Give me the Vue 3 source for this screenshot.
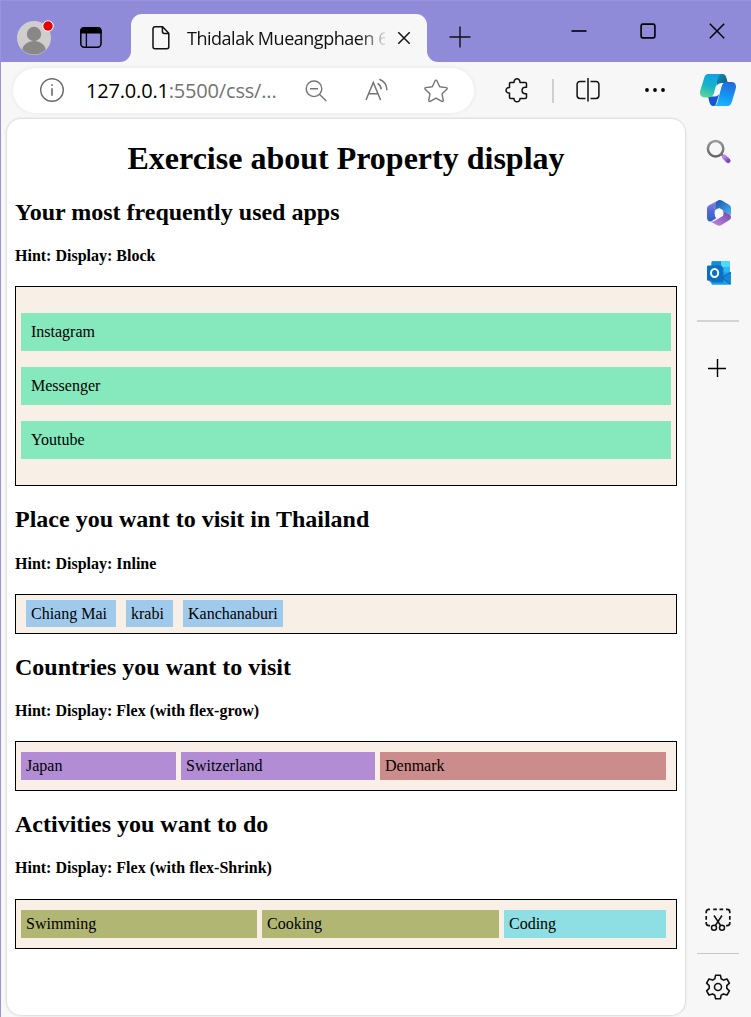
<script setup>
const apps = ['Instagram', 'Messenger', 'Youtube']
const places = [
  { name: 'Chiang Mai', cls: 'w90' },
  { name: 'krabi', cls: 'w47' },
  { name: 'Kanchanaburi', cls: 'w100' },
]
const countries = [
  { name: 'Japan', cls: 'purple w155' },
  { name: 'Switzerland', cls: 'purple w194' },
  { name: 'Denmark', cls: 'rose w286' },
]
const activities = [
  { name: 'Swimming', cls: 'olive w236' },
  { name: 'Cooking', cls: 'olive w237' },
  { name: 'Coding', cls: 'aqua w162' },
]
</script>

<template>
  <div class="window">
    <header class="titlebar">
      <svg class="avatar" width="40" height="40" viewBox="0 0 40 40">
        <defs><clipPath id="face"><circle cx="18" cy="20" r="16.5" /></clipPath></defs>
        <circle cx="18" cy="20" r="17" fill="#d0cecd" />
        <g clip-path="url(#face)" fill="#8a8886">
          <circle cx="18" cy="16" r="7.2" />
          <ellipse cx="18" cy="33.5" rx="12" ry="10.5" />
        </g>
        <circle cx="32" cy="8" r="5.8" fill="#f3eef5" />
        <circle cx="32" cy="8" r="4.7" fill="#e60000" />
      </svg>
      <svg class="workspaces" width="24" height="24" viewBox="0 0 24 24">
        <rect x="1.8" y="2.8" width="20.2" height="19.4" rx="3.4" fill="none" stroke="#000" stroke-width="1.5" />
        <path d="M1.2 8.6V6a4 4 0 0 1 4-4h13.4a4 4 0 0 1 4 4v2.6z" />
        <path d="M7.4 8v14" stroke="#000" stroke-width="1.3" />
      </svg>
      <div class="tab">
        <svg class="curve" width="11" height="11" viewBox="0 0 11 11"><path d="M11 0v11H0A11 11 0 0 0 11 0z" fill="#f7f7f7" /></svg>
        <svg class="curve right" width="11" height="11" viewBox="0 0 11 11"><path d="M0 0v11h11A11 11 0 0 1 0 0z" fill="#f7f7f7" /></svg>
        <svg class="doc" width="20" height="26" viewBox="0 0 20 26">
          <path d="M4 1.8h7.6l6.2 6.4v13.6a2 2 0 0 1-2 2H4a2 2 0 0 1-2-2v-18a2 2 0 0 1 2-2zM11.4 2v4.6a2 2 0 0 0 2 2h4.4" fill="none" stroke="#111" stroke-width="1.5" />
        </svg>
        <span class="tab-title">Thidalak Mueangphaen 6</span>
        <svg class="tab-close" width="14" height="14" viewBox="0 0 14 14"><path d="M1.3 1.3l11.4 11.4M12.7 1.3L1.3 12.7" stroke="#111" stroke-width="1.5" /></svg>
      </div>
      <svg class="newtab" width="22" height="22" viewBox="0 0 22 22"><path d="M.5 11h21M11 .5v21" stroke="#111" stroke-width="1.4" /></svg>
      <div class="controls">
        <svg width="16" height="16" viewBox="0 0 16 16"><path d="M.5 8h15" stroke="#000" stroke-width="1.6" /></svg>
        <svg width="16" height="16" viewBox="0 0 16 16"><rect x="1.1" y="1.1" width="13.8" height="13.8" rx="1.8" fill="none" stroke="#000" stroke-width="1.6" /></svg>
        <svg width="16" height="16" viewBox="0 0 16 16"><path d="M.8.8l14.4 14.4M15.2.8L.8 15.2" stroke="#000" stroke-width="1.5" /></svg>
      </div>
    </header>

    <div class="toolbar">
      <div class="address">
        <svg width="26" height="26" viewBox="0 0 26 26" fill="none" stroke="#6b6b6b" stroke-width="1.4">
          <circle cx="13" cy="13" r="11.3" /><path d="M13 11.3v7.4" stroke-width="1.6" /><circle cx="13" cy="8" r=".6" fill="#6b6b6b" stroke-width=".8" />
        </svg>
        <span class="url"><b>127.0.0.1</b>:5500/css/...</span>
        <svg class="zoomout" width="22" height="22" viewBox="0 0 22 22" fill="none" stroke="#747474" stroke-width="1.4">
          <circle cx="9" cy="8.8" r="7.8" /><path d="M5 8.8h8M14.6 14.6l6.7 6.4" />
        </svg>
        <svg class="read" width="24" height="24" viewBox="0 0 24 24" fill="none" stroke="#747474" stroke-width="1.5">
          <path d="M1 22L8.3 4.4 15.600 22M3.700 15.800h9.200" />
          <path d="M12.600 5.400c2.200 1.300 3.500 3.300 3.700 6M14.400 1.200c4.700 1.800 7.500 6 7.500 11" />
        </svg>
        <svg class="star" width="26" height="26" viewBox="0 0 26 26">
          <path d="M12.1 2.7c.35-.75 1.45-.75 1.8 0l2.8 6 6.6.9c.85.12 1.15 1.1.55 1.65l-4.8 4.6 1.2 6.5c.15.8-.7 1.4-1.4 1L13 20.2l-5.850 3.150c-.7.4-1.550-.2-1.400-1l1.200-6.500-4.800-4.600c-.6-.55-.3-1.530.55-1.650l6.600-.9z" fill="none" stroke="#747474" stroke-width="1.4" stroke-linejoin="round" />
        </svg>
      </div>
      <svg class="puzzle" width="26" height="26" viewBox="0 0 26 26">
        <path d="M5.500 5.500H9c-.2-5 6.200-5 6 0h5.200c.8 0 1.300.5 1.300 1.300v3.500h-1c-4.600 0-4.600 6.400 0 6.400h1v3.500c0 .8-.5 1.300-1.300 1.300H15c.2 4.400-6.200 4.400-6 0H5.800c-.8 0-1.300-.5-1.300-1.300v-4.100c-4.600.2-4.600-5.800 0-5.600V6.700c0-.7.4-1.200 1-1.200z" fill="none" stroke="#111" stroke-width="1.5" stroke-linejoin="round" />
      </svg>
      <i class="vline"></i>
      <svg class="split" width="26" height="26" viewBox="0 0 26 26" fill="none" stroke="#111" stroke-width="1.5">
        <path d="M10.5 4.4H5a2.9 2.9 0 0 0-2.900 2.900v11.200A2.900 2.900 0 0 0 5 21.400h5.500M15.500 4.400H21a2.900 2.900 0 0 1 2.900 2.900v11.200a2.900 2.900 0 0 1-2.900 2.900h-5.500M13 1v23.500" />
      </svg>
      <svg class="dots" width="22" height="6" viewBox="0 0 22 6"><circle cx="3" cy="3" r="1.9" /><circle cx="11" cy="3" r="1.9" /><circle cx="19" cy="3" r="1.9" /></svg>
      <svg class="copilot" width="36" height="32" viewBox="0 0 36 32">
        <defs>
          <linearGradient id="cpA" x1=".5" y1="0" x2=".2" y2="1"><stop offset="0" stop-color="#0fa2e4" /><stop offset=".5" stop-color="#16b4c8" /><stop offset="1" stop-color="#61d593" /></linearGradient>
          <linearGradient id="cpB" x1=".6" y1="0" x2=".4" y2="1"><stop offset="0" stop-color="#2569d9" /><stop offset=".6" stop-color="#1498f5" /><stop offset="1" stop-color="#19b5fb" /></linearGradient>
          <linearGradient id="cpC" x1="0" y1="0" x2="1" y2="1"><stop offset="0" stop-color="#1193b5" /><stop offset="1" stop-color="#075a87" /></linearGradient>
        </defs>
        <path d="M17 0h5.500c2.200 0 3.300 1.600 3.900 3.800L27.800 9h-6c-2 0-4.200 1-5.400 3z" fill="url(#cpC)" />
        <path d="M8 22.500h6c2 0 4-.5 5.200-2.500L16 30c-.5 1.400-1.300 2-2.600 2-2.400 0-3.400-1.800-4-4z" fill="#1753d2" />
        <path d="M8 0h14c-2.400 0-3.400 2-4.100 4.600l-3.800 14.200c-.9 3-2.400 4.600-5.400 4.600H4.400C.6 23.400-.8 20 .4 16.300L4 4.400C4.800 1.600 6 0 8 0z" fill="url(#cpA)" />
        <path d="M28 32H13.600c2.400 0 3.400-2 4.100-4.600l3.800-14.600c.9-3 2.400-4.700 5.400-4.700h4.700c3.800 0 5.200 3.400 4 7.100L32 27.600c-.8 2.800-2 4.400-4 4.400z" fill="url(#cpB)" />
      </svg>
    </div>

    <div class="body">
      <main class="page">
        <h1>Exercise about Property display</h1>

        <h2>Your most frequently used apps</h2>
        <h4>Hint: Display: Block</h4>
        <div class="box blocks">
          <div v-for="a in apps" :key="a" class="block">{{ a }}</div>
        </div>

        <h2>Place you want to visit in Thailand</h2>
        <h4>Hint: Display: Inline</h4>
        <div class="box inlines">
          <span v-for="p in places" :key="p.name" :class="p.cls">{{ p.name }}</span>
        </div>

        <h2>Countries you want to visit</h2>
        <h4>Hint: Display: Flex (with flex-grow)</h4>
        <div class="box row">
          <div v-for="c in countries" :key="c.name" :class="c.cls">{{ c.name }}</div>
        </div>

        <h2>Activities you want to do</h2>
        <h4>Hint: Display: Flex (with flex-Shrink)</h4>
        <div class="box row">
          <div v-for="a in activities" :key="a.name" :class="a.cls">{{ a.name }}</div>
        </div>
      </main>

      <aside class="sidebar">
        <svg class="search" width="26" height="26" viewBox="0 0 26 26">
          <defs>
            <linearGradient id="lens" x1="0" y1="0" x2="0" y2="1"><stop offset="0" stop-color="#9a9a9a" /><stop offset="1" stop-color="#666" /></linearGradient>
            <linearGradient id="grip" x1="0" y1="0" x2="1" y2="1"><stop offset="0" stop-color="#bd8be6" /><stop offset="1" stop-color="#8345c0" /></linearGradient>
          </defs>
          <circle cx="9.600" cy="9.700" r="7.700" fill="none" stroke="url(#lens)" stroke-width="2.500" />
          <path d="M15 15l2.700 2.500" stroke="#707070" stroke-width="2.200" />
          <path d="M18.200 17.900l4 3.800" stroke="url(#grip)" stroke-width="4.800" stroke-linecap="round" />
        </svg>
        <svg class="m365" width="26" height="26" viewBox="0 0 26 26">
          <defs>
            <linearGradient id="mA" x1="0" y1="0" x2="0" y2="1"><stop offset="0" stop-color="#a77fe8" /><stop offset=".5" stop-color="#5269d5" /><stop offset="1" stop-color="#2d62c4" /></linearGradient>
            <linearGradient id="mB" x1="0" y1="0" x2="1" y2="1"><stop offset="0" stop-color="#1b4fa8" /><stop offset="1" stop-color="#43b9f7" /></linearGradient>
            <linearGradient id="mC" x1="0" y1="1" x2="1" y2="0"><stop offset="0" stop-color="#c78be9" /><stop offset="1" stop-color="#6b45a5" /></linearGradient>
          </defs>
          <path d="M12.500.2L3 5.300C1.600 6.100 1 7.200 1 8.800v9c0 2.500 1.700 4 4 3.600l5.200-3.100-1.300-2.300V8.500c0-2.700.3-5.700 3.600-8.300z" fill="url(#mA)" />
          <path d="M12.200.4c1.400-.6 2.500-.5 3.700.2L23 4.800c1.500.9 2 2 2 3.600v6.800l-7.800-4.500-4.100-2.400-3.900 2.200V6.200C9.200 3.600 10 1.500 12.200.4z" fill="url(#mB)" />
          <path d="M17.200 10.700l6 3.500c2.400 1.500 2.300 4.500.2 5.800l-7.900 4.900c-1.600.9-3.100 1-4.700.2L4.200 21.500c2.100.6 3.700-.2 5.400-1.200l7.600-4.600z" fill="url(#mC)" />
          <circle cx="13" cy="12.900" r="4.400" fill="#f7f7f7" />
        </svg>
        <svg class="outlook" width="26" height="26" viewBox="0 0 26 26">
          <rect x="5.300" y="1" width="18.700" height="17" rx="1.500" fill="#28a8ea" />
          <path d="M15 1h7.500c.9 0 1.500.6 1.500 1.500V8h-9z" fill="#50d9ff" />
          <path d="M6 1.500h9V6H5.500z" fill="#178cd4" />
          <path d="M15 7h9v6h-9z" fill="#2cb9f1" />
          <path d="M5.300 13.500L25 12v11.300c0 .9-.6 1.500-1.500 1.500H6.800c-.9 0-1.500-.6-1.500-1.500z" fill="#1aa0ea" />
          <path d="M25 12l-9.500 5.600L24.500 24.500" fill="#1488d8" />
          <path d="M25 12.200l-9 5.500 8.500 6.500" fill="none" stroke="#0a5ba8" stroke-width=".8" />
          <rect x="3.500" y="7" width="14" height="15.500" rx="1.500" fill="#075c9e" opacity=".65" />
          <rect x="1" y="5.500" width="15.300" height="15.300" rx="1.400" fill="#0870c6" />
          <ellipse cx="8.600" cy="13.100" rx="3.600" ry="4" fill="none" stroke="#fff" stroke-width="2" />
        </svg>
        <i class="rule first"></i>
        <svg class="add" width="20" height="20" viewBox="0 0 20 20"><path d="M1 10.500h18M10.500 1v18" stroke="#000" stroke-width="1.400" /></svg>
        <svg class="snip" width="26" height="24" viewBox="0 0 26 24" fill="none" stroke="#111" stroke-width="1.700">
          <path d="M1.200 5.200V4a2.600 2.600 0 0 1 2.600-2.600H5M8.200 1.400h3.700M14.500 1.400h3.700M21 1.400h1.200A2.600 2.600 0 0 1 24.800 4v1.200M24.800 8v3.700M24.800 14v1a2.600 2.600 0 0 1-2.600 2.600H21M1.200 8v3.700M1.200 14v1a2.600 2.600 0 0 0 2.600 2.600H5" />
          <path d="M9 7.500l6.600 10M17 7.500l-6.600 10" stroke-width="1.500" /><circle cx="9" cy="19.700" r="2.500" stroke-width="1.500" /><circle cx="17" cy="19.700" r="2.500" stroke-width="1.500" />
        </svg>
        <i class="rule low"></i>
        <svg class="gear" width="26" height="26" viewBox="0 0 26 26" fill="none" stroke="#111" stroke-width="1.600" stroke-linejoin="round">
          <circle cx="13" cy="13" r="3.500" />
          <path d="M10.600 1.200h4.800l.8 3.600 2.200 1.300 3.600-1.100 2.400 4.200-2.600 2.500v2.600l2.600 2.500-2.400 4.200-3.600-1.100-2.200 1.300-.8 3.600h-4.800l-.8-3.600-2.200-1.300L4 21l-2.400-4.200 2.600-2.500v-2.600L1.600 9.200 4 5l3.600 1.100 2.200-1.300z" />
        </svg>
      </aside>
    </div>
  </div>
</template>

<style>
body { margin: 0; }
</style>

<style scoped>
.window {
  box-sizing: border-box;
  width: 751px;
  height: 1017px;
  overflow: hidden;
  background: #f7f7f7;
  border-left: 1px solid #9993df;
  color: #000;
}
svg { display: block; flex: none; }
.titlebar {
  box-sizing: border-box;
  display: flex;
  align-items: flex-start;
  height: 62px;
  background: #8f8bd8;
  border-top: 1px solid #9993df;
}
.avatar { margin: 17px 0 0 15px; }
.workspaces { margin: 24px 0 0 23px; }
.tab {
  position: relative;
  display: flex;
  box-sizing: border-box;
  width: 296px;
  height: 48px;
  margin: 13px 0 0 28px;
  background: #f7f7f7;
  border-radius: 11px 11px 0 0;
}
.curve { position: absolute; left: -11px; bottom: 0; }
.curve.right { left: auto; right: -11px; }
.doc { margin: 11px 0 0 20px; }
.tab-title {
  width: 198px;
  margin: 10px 0 0 16px;
  font: 18px/28px "Open Sans", sans-serif;
  letter-spacing: -0.48px;
  white-space: nowrap;
  overflow: hidden;
  color: #111;
  -webkit-mask-image: linear-gradient(90deg, #000 172px, transparent 202px);
  mask-image: linear-gradient(90deg, #000 172px, transparent 202px);
}
.tab-close { margin: 17px 0 0 11.5px; }
.newtab { margin: 25px 0 0 21.5px; }
.controls { display: flex; gap: 53px; margin: 22px 0 0 100px; }

.toolbar { display: flex; height: 57px; align-items: flex-start; }
.address {
  display: flex;
  width: 461px;
  height: 45px;
  margin: 6px 0 0 12px;
  border-radius: 23px;
  background: #fff;
  box-shadow: 0 0 5px rgba(0, 0, 0, 0.07);
}
.address > svg:first-child { margin: 9px 0 0 26px; }
.url {
  width: 195px;
  margin: 9px 0 0 21px;
  font: 20px/28px "Open Sans", sans-serif;
  letter-spacing: -0.18px;
  white-space: nowrap;
  color: #737373;
}
.url b { font-weight: 400; color: #000; }
.zoomout { margin: 12px 0 0 24px; }
.read { margin: 10px 0 0 38px; }
.star { margin: 10px 0 0 34px; }
.puzzle { margin: 15px 0 0 30.5px; }
.vline { width: 2px; height: 24px; margin: 17px 0 0 21.5px; background: #d0d0d0; }
.split { margin: 15px 0 0 21px; }
.dots { margin: 25px 0 0 43px; }
.copilot { margin: 12px 0 0 34px; }

.body { display: flex; }
.page {
  box-sizing: border-box;
  width: 678px;
  height: 896px;
  margin-left: 6px;
  padding: 0 8px;
  overflow: hidden;
  border-radius: 14px;
  background: #fff;
  box-shadow: 0 0 2px 1px rgba(0, 0, 0, 0.12);
  font: 16px/18px "Liberation Serif", "Times New Roman", serif;
}
h1 { margin: 21.44px 0; font-size: 32px; line-height: 37px; text-align: center; }
h2 { margin: 19.92px 0; font-size: 24px; line-height: 27px; }
h4 { margin: 21.28px 0; font-size: 16px; line-height: 18px; }
.box {
  box-sizing: border-box;
  display: flex;
  border: 1px solid #000;
  background: #f8efe6;
}
.blocks { flex-direction: column; gap: 16px; height: 200px; padding: 26px 5px; }
.block { box-sizing: border-box; height: 38px; padding: 10px; background: #86e8bd; }
.inlines { gap: 10px; height: 40px; padding: 5px 10px; }
.inlines span { box-sizing: border-box; height: 27px; padding: 5px; line-height: 18px; background: #9fcaec; white-space: nowrap; }
.row { gap: 5px; height: 50px; padding: 10px 5px; }
.row div { box-sizing: border-box; height: 28px; padding: 5px; }
.purple { background: #b28dd5; }
.rose { background: #cc8c8c; }
.olive { background: #b1b673; }
.aqua { background: #8edfe3; }
.w90 { width: 90px; }
.w47 { width: 47px; }
.w100 { width: 100px; }
.w155 { width: 155px; }
.w194 { width: 194px; }
.w286 { width: 286px; }
.w236 { width: 236px; }
.w237 { width: 237px; }
.w162 { width: 162px; }

.sidebar { display: flex; flex-direction: column; align-items: center; width: 66px; }
.search { margin: 20px 0 0 1px; }
.m365 { margin: 35px 0 0 2px; }
.outlook { margin: 34px 0 0 2px; }
.rule { width: 42px; height: 1px; margin-top: 35px; background: #c9c9c9; }
.rule.first { height: 2px; margin-top: 34px; background: #d3d3d3; }
.add { margin: 36px 2px 0 0; }
.snip { margin-top: 530px; }
.rule.low { margin-top: 21px; }
.gear { margin-top: 20px; }
</style>
